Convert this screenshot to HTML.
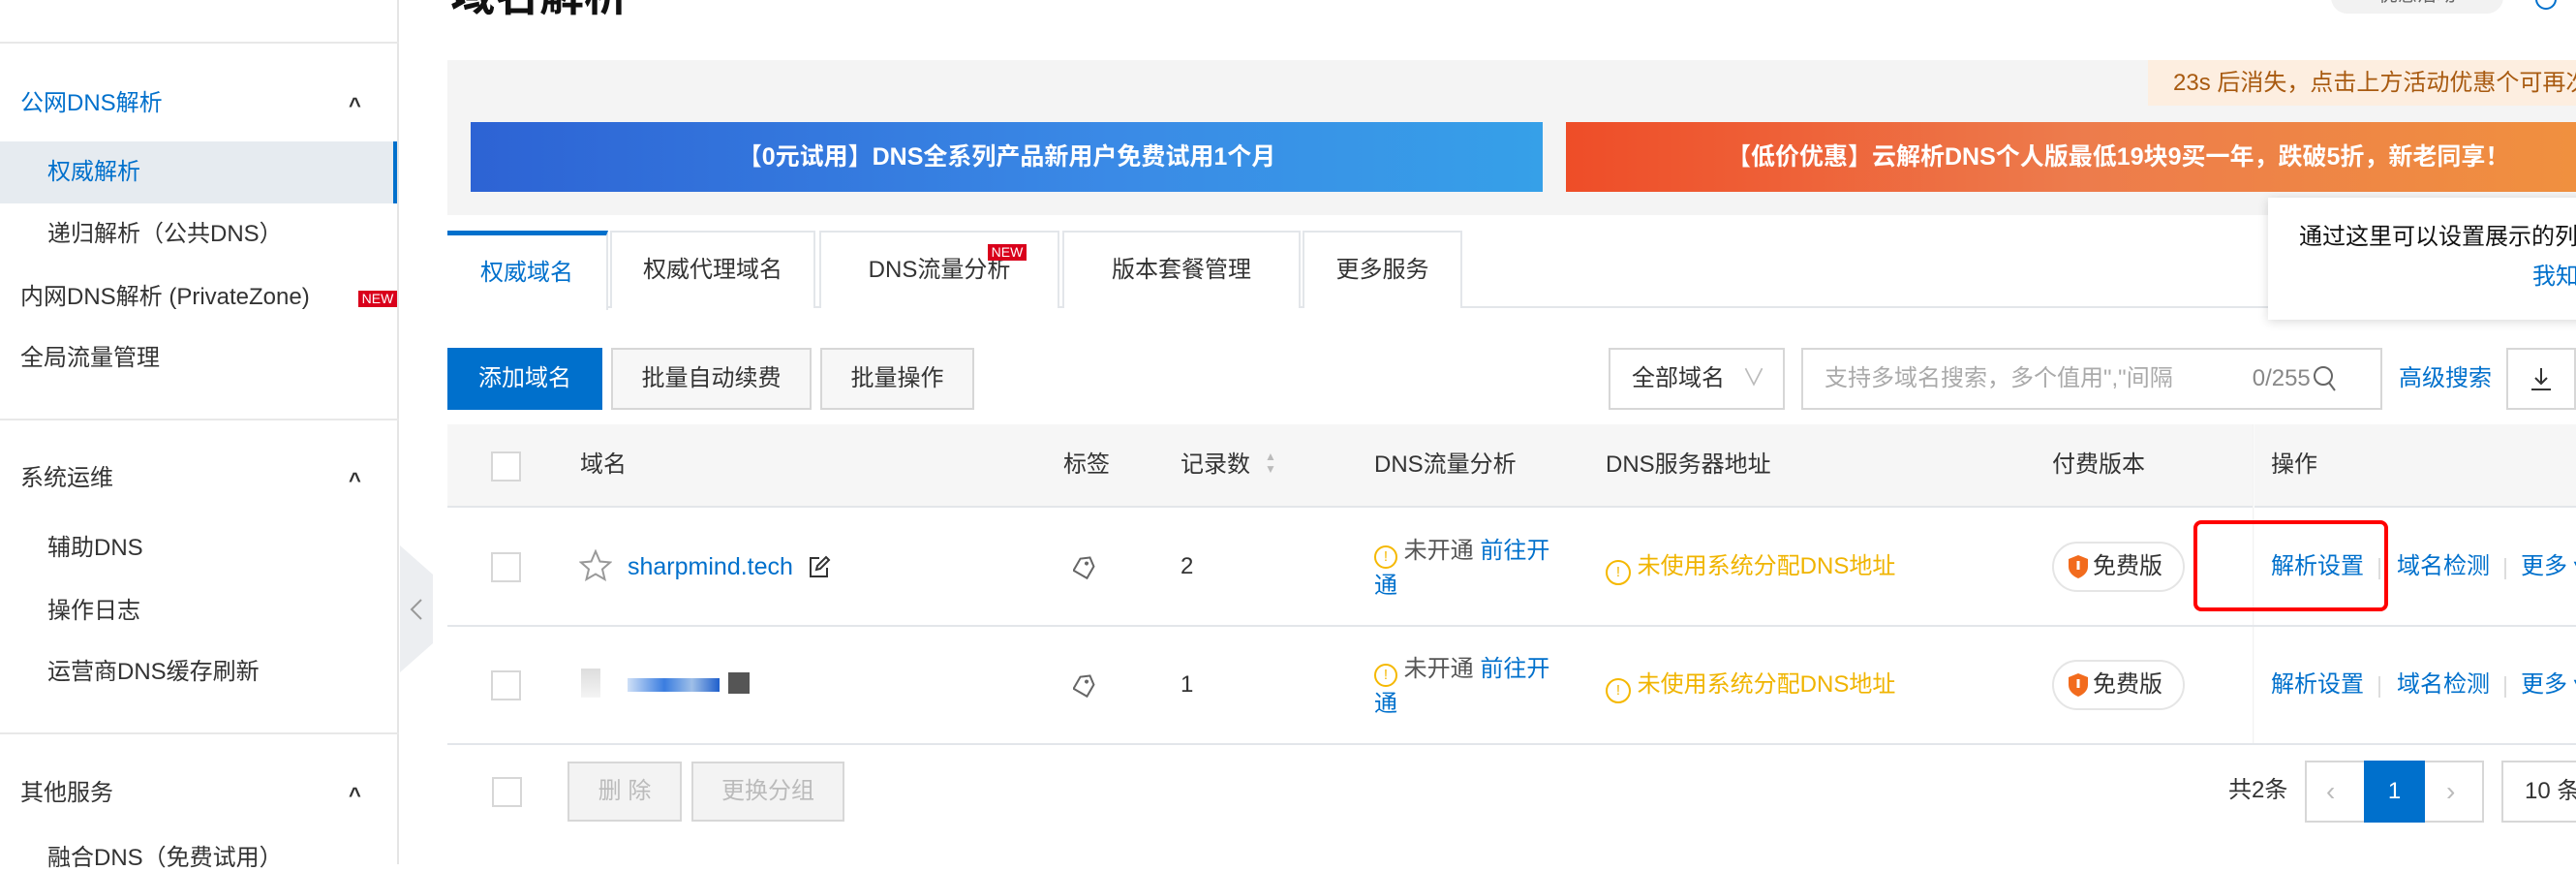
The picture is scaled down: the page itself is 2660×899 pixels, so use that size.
<!DOCTYPE html>
<html><head><meta charset="utf-8"><style>
*{box-sizing:border-box;margin:0;padding:0}
body{width:2660px;height:892px;overflow:hidden;background:#fff;font-family:"Liberation Sans","Noto Sans CJK SC",sans-serif;font-size:24px;line-height:1;color:#333;position:relative}
.a{position:absolute;white-space:nowrap}
.blue{color:#0070cc}
.cb{position:absolute;width:31px;height:31px;border:2px solid #d7d7d7;background:#fff}
.btn{position:absolute;border:2px solid #d7d7d7;background:#f7f7f7;display:flex;align-items:center;justify-content:center;color:#333}
.tab{position:absolute;top:238px;height:80px;border:2px solid #e3e6ea;border-bottom:none;background:#fff;display:flex;align-items:center;justify-content:center}
.caret{position:absolute;left:360px;font-size:22px;font-weight:bold;color:#333}
.sep{position:absolute;width:2px;height:22px;background:#ddd}
</style></head><body>
<!-- sidebar -->
<div class="a" style="left:0;top:0;width:412px;height:892px;border-right:2px solid #e5e5e5"></div>
<div class="a" style="left:0;top:43px;width:412px;height:2px;background:#e8e8e8"></div>
<div class="a blue" style="left:21px;top:95px">公网DNS解析</div><div class="caret" style="top:98px">^</div>
<div class="a" style="left:0;top:146px;width:410px;height:64px;background:#e6ebf0;border-right:4px solid #0070cc"></div>
<div class="a blue" style="left:49px;top:166px">权威解析</div>
<div class="a" style="left:49px;top:230px">递归解析（公共DNS）</div>
<div class="a" style="left:21px;top:295px">内网DNS解析 (PrivateZone)</div>
<div class="a" style="left:370px;top:300px;width:40px;height:17px;background:#d9001b;color:#fff;font-size:14px;line-height:17px;text-align:center">NEW</div>
<div class="a" style="left:21px;top:358px">全局流量管理</div>
<div class="a" style="left:0;top:432px;width:412px;height:2px;background:#e8e8e8"></div>
<div class="a" style="left:21px;top:482px">系统运维</div><div class="caret" style="top:485px">^</div>
<div class="a" style="left:49px;top:554px">辅助DNS</div>
<div class="a" style="left:49px;top:619px">操作日志</div>
<div class="a" style="left:49px;top:682px">运营商DNS缓存刷新</div>
<div class="a" style="left:0;top:756px;width:412px;height:2px;background:#e8e8e8"></div>
<div class="a" style="left:21px;top:807px">其他服务</div><div class="caret" style="top:810px">^</div>
<div class="a" style="left:49px;top:874px">融合DNS（免费试用）</div>
<svg class="a" style="left:413px;top:563px" width="34" height="131"><path d="M0 0 L34 30 L34 101 L0 131Z" fill="#eceef1"/><path d="M22 56 L12 66 L22 76" stroke="#999" stroke-width="2" fill="none"/></svg>
<!-- title -->
<div class="a" style="left:465px;top:-28px;font-size:46px;font-weight:bold;color:#111">域名解析</div>
<div class="a" style="left:2407px;top:-20px;width:178px;height:34px;border-radius:17px;background:#f2f2f2;font-size:20px;color:#666;text-align:center;line-height:30px">优惠活动</div>
<div class="a" style="left:2618px;top:-12px;width:22px;height:22px;border:2px solid #0070cc;border-radius:50%"></div>
<!-- banners -->
<div class="a" style="left:462px;top:62px;width:2198px;height:160px;background:#f4f4f4"></div>
<div class="a" style="left:486px;top:126px;width:1107px;height:72px;background:linear-gradient(90deg,#2d63d4,#3a8ae6 60%,#36a0e8);color:#fff;font-weight:bold;font-size:25px;display:flex;align-items:center;justify-content:center">【0元试用】DNS全系列产品新用户免费试用1个月</div>
<div class="a" style="left:1617px;top:126px;width:1043px;height:72px;background:linear-gradient(90deg,#ee4d28,#ed7b4c 50%,#f0903f);color:#fff;font-weight:bold;font-size:25px;padding-left:166px;line-height:72px">【低价优惠】云解析DNS个人版最低19块9买一年，跌破5折，新老同享！</div>
<div class="a" style="left:2218px;top:62px;width:442px;height:47px;background:#fdeee0;color:#a85a10;padding-left:26px;line-height:47px">23s 后消失，点击上方活动优惠个可再次查看</div>
<!-- tabs -->
<div class="a" style="left:462px;top:316px;width:2198px;height:2px;background:#e3e6ea"></div>
<div class="tab blue" style="left:462px;width:166px;border-top:5px solid #0070cc;height:82px;border-left:none">权威域名</div>
<div class="tab" style="left:630px;width:212px">权威代理域名</div>
<div class="tab" style="left:846px;width:248px">DNS流量分析</div>
<div class="a" style="left:1020px;top:252px;width:40px;height:17px;background:#d9001b;color:#fff;font-size:14px;line-height:17px;text-align:center">NEW</div>
<div class="tab" style="left:1097px;width:246px">版本套餐管理</div>
<div class="tab" style="left:1345px;width:165px">更多服务</div>
<!-- popover -->
<div class="a" style="left:2342px;top:204px;width:330px;height:126px;background:#fff;box-shadow:0 2px 10px rgba(0,0,0,.15)"></div>
<div class="a" style="left:2374px;top:233px;color:#111">通过这里可以设置展示的列</div>
<div class="a blue" style="left:2615px;top:274px">我知道了</div>
<!-- toolbar -->
<div class="btn" style="left:462px;top:359px;width:160px;height:64px;background:#0070cc;border-color:#0070cc;color:#fff">添加域名</div>
<div class="btn" style="left:631px;top:359px;width:207px;height:64px">批量自动续费</div>
<div class="btn" style="left:847px;top:359px;width:159px;height:64px">批量操作</div>
<div class="btn" style="left:1661px;top:359px;width:182px;height:64px;background:#fff;justify-content:flex-start;padding-left:22px">全部域名<span style="color:#bbb;margin-left:18px">∨</span></div>
<div class="btn" style="left:1860px;top:359px;width:600px;height:64px;background:#fff;justify-content:flex-start;padding-left:22px;color:#aaa">支持多域名搜索，多个值用","间隔<span style="margin-left:82px;color:#888">0/255</span>
<svg width="26" height="30" style="margin-left:2px"><circle cx="11" cy="12" r="9" stroke="#666" stroke-width="2" fill="none"/><path d="M17 19 L23 27" stroke="#666" stroke-width="2"/></svg></div>
<div class="a blue" style="left:2477px;top:379px">高级搜索</div>
<div class="btn" style="left:2588px;top:359px;width:72px;height:64px;background:#fff"><svg width="24" height="26"><path d="M12 2V18M6 12L12 18L18 12M2 24H22" stroke="#333" stroke-width="2" fill="none"/></svg></div>
<!-- table -->
<div class="a" style="left:462px;top:438px;width:2198px;height:86px;background:#f6f6f6;border-bottom:2px solid #e3e6ea"></div>
<div class="cb" style="left:507px;top:466px"></div>
<div class="a" style="left:599px;top:468px">域名</div>
<div class="a" style="left:1098px;top:468px">标签</div>
<div class="a" style="left:1219px;top:468px">记录数</div>
<div class="a" style="left:1306px;top:465px;font-size:12px;color:#bbb;line-height:13px">▲<br>▼</div>
<div class="a" style="left:1419px;top:468px">DNS流量分析</div>
<div class="a" style="left:1658px;top:468px">DNS服务器地址</div>
<div class="a" style="left:2119px;top:468px">付费版本</div>
<div class="a" style="left:2345px;top:468px">操作</div>
<div class="a" style="left:2326px;top:438px;width:2px;height:330px;background:linear-gradient(90deg,#eee,#fff)"></div>
<div class="a" style="left:462px;top:645px;width:2198px;height:2px;background:#e3e6ea"></div>
<div class="a" style="left:462px;top:767px;width:2198px;height:2px;background:#e3e6ea"></div>
<!-- rows -->
<div class="cb" style="left:507px;top:570px"></div>
<svg class="a" style="left:598px;top:567px" width="34" height="34"><path d="M17 2L21.5 12.5L32 13.5L24 20.5L26.5 31L17 25.5L7.5 31L10 20.5L2 13.5L12.5 12.5Z" stroke="#999" stroke-width="2" fill="none"/></svg>
<div class="a blue" style="left:648px;top:573px;font-size:25px">sharpmind.tech</div>
<svg class="a" style="left:834px;top:572px" width="24" height="26"><path d="M12 4H3V23H20V14" stroke="#333" stroke-width="2" fill="none"/><path d="M9 16L10 12L19 3L22 6L13 15Z" stroke="#333" stroke-width="2" fill="none"/></svg>
<div class="cb" style="left:507px;top:692px"></div>
<div class="a" style="left:600px;top:690px;width:20px;height:30px;background:linear-gradient(#ddd,#f4f4f4)"></div>
<div class="a" style="left:648px;top:700px;width:95px;height:14px;background:linear-gradient(90deg,#cfe0f7,#3a7de0 40%,#9fbfe8 70%,#1f5fcc)"></div>
<div class="a" style="left:752px;top:694px;width:22px;height:22px;background:#555"></div>
<svg class="a" style="left:1108px;top:572px" width="24" height="26"><path d="M12 2L20 8V22H4V8Z" transform="rotate(30 12 13)" stroke="#666" stroke-width="2" fill="none"/><circle cx="12" cy="9" r="2" fill="#666" transform="rotate(30 12 13)"/></svg>
<svg class="a" style="left:1108px;top:694px" width="24" height="26"><path d="M12 2L20 8V22H4V8Z" transform="rotate(30 12 13)" stroke="#666" stroke-width="2" fill="none"/><circle cx="12" cy="9" r="2" fill="#666" transform="rotate(30 12 13)"/></svg>
<div class="a" style="left:1219px;top:573px">2</div>
<div class="a" style="left:1219px;top:695px">1</div>
<div class="a" style="left:1419px;top:551px;line-height:36px"><span style="display:inline-block;width:24px;height:24px;border:2px solid #f5b800;border-radius:50%;color:#f5b800;font-size:15px;text-align:center;line-height:20px;vertical-align:-3px">!</span> <span style="color:#555">未开通</span> <span class="blue">前往开</span><br><span class="blue">通</span></div>
<div class="a" style="left:1419px;top:673px;line-height:36px"><span style="display:inline-block;width:24px;height:24px;border:2px solid #f5b800;border-radius:50%;color:#f5b800;font-size:15px;text-align:center;line-height:20px;vertical-align:-3px">!</span> <span style="color:#555">未开通</span> <span class="blue">前往开</span><br><span class="blue">通</span></div>
<div class="a" style="left:1658px;top:573px;color:#f0b400"><span style="display:inline-block;width:26px;height:26px;border:2px solid #f5b800;border-radius:50%;font-size:15px;text-align:center;line-height:22px;vertical-align:-3px">!</span> 未使用系统分配DNS地址</div>
<div class="a" style="left:1658px;top:695px;color:#f0b400"><span style="display:inline-block;width:26px;height:26px;border:2px solid #f5b800;border-radius:50%;font-size:15px;text-align:center;line-height:22px;vertical-align:-3px">!</span> 未使用系统分配DNS地址</div>
<div class="a" style="left:2119px;top:559px;width:137px;height:52px;border:2px solid #e5e5e5;border-radius:26px;display:flex;align-items:center;padding-left:14px;gap:4px"><svg width="22" height="26"><path d="M11 1L21 5V13C21 19 16 23 11 25C6 23 1 19 1 13V5Z" fill="#f26b1d"/><rect x="9.5" y="7" width="3" height="9" fill="#fff"/></svg>免费版</div>
<div class="a" style="left:2119px;top:681px;width:137px;height:52px;border:2px solid #e5e5e5;border-radius:26px;display:flex;align-items:center;padding-left:14px;gap:4px"><svg width="22" height="26"><path d="M11 1L21 5V13C21 19 16 23 11 25C6 23 1 19 1 13V5Z" fill="#f26b1d"/><rect x="9.5" y="7" width="3" height="9" fill="#fff"/></svg>免费版</div>
<div class="a blue" style="left:2345px;top:573px">解析设置</div><div class="sep" style="left:2456px;top:576px"></div>
<div class="a blue" style="left:2475px;top:573px">域名检测</div><div class="sep" style="left:2586px;top:576px"></div>
<div class="a blue" style="left:2603px;top:573px">更多 ▾</div>
<div class="a blue" style="left:2345px;top:695px">解析设置</div><div class="sep" style="left:2456px;top:698px"></div>
<div class="a blue" style="left:2475px;top:695px">域名检测</div><div class="sep" style="left:2586px;top:698px"></div>
<div class="a blue" style="left:2603px;top:695px">更多 ▾</div>
<div class="a" style="left:2265px;top:537px;width:201px;height:94px;border:4px solid #f00;border-radius:8px"></div>
<!-- footer -->
<div class="cb" style="left:508px;top:802px"></div>
<div class="btn" style="left:586px;top:786px;width:118px;height:62px;background:#f3f3f3;color:#bbb">删 除</div>
<div class="btn" style="left:714px;top:786px;width:158px;height:62px;background:#f3f3f3;color:#bbb">更换分组</div>
<div class="a" style="left:2301px;top:804px">共2条</div>
<div class="btn" style="left:2380px;top:785px;width:185px;height:64px;background:#fff"></div>
<div class="a" style="left:2402px;top:803px;color:#bbb;font-size:28px">&lsaquo;</div>
<div class="a" style="left:2441px;top:785px;width:63px;height:64px;background:#0070cc;color:#fff;text-align:center;line-height:64px">1</div>
<div class="a" style="left:2526px;top:803px;color:#bbb;font-size:28px">&rsaquo;</div>
<div class="btn" style="left:2583px;top:785px;width:100px;height:64px;background:#fff;justify-content:flex-start;padding-left:22px">10 条</div>
</body></html>
